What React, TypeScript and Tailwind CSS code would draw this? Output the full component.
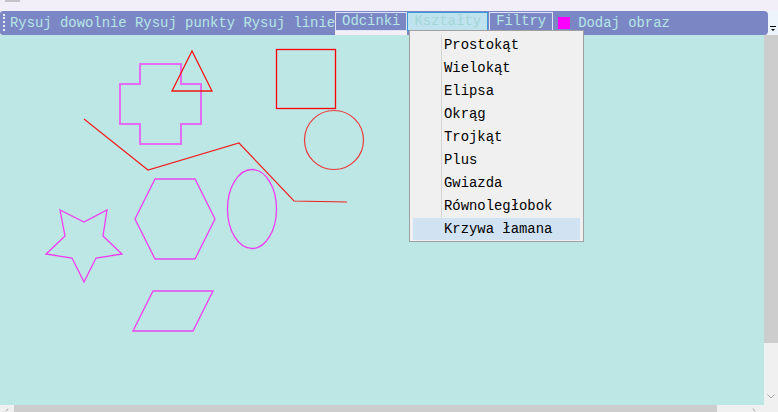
const menuItems = [
  "Prostokąt",
  "Wielokąt",
  "Elipsa",
  "Okrąg",
  "Trojkąt",
  "Plus",
  "Gwiazda",
  "Równoległobok",
  "Krzywa łamana",
];

const mono = { fontFamily: '"Liberation Mono", "Courier New", monospace' };

const Canvas = () => (
  <svg width="764" height="370" viewBox="0 35 764 370" className="block">
    {/* plus */}
    <polygon
      points="140,64 181,64 181,84 201,84 201,124 181,124 181,144 140,144 140,124 120,124 120,84 140,84"
      fill="none"
      stroke="#e46cf2"
      strokeWidth="2"
    />
    {/* triangle */}
    <polygon points="192,51 172,91 212,91" fill="none" stroke="#f01818" strokeWidth="1.3" />
    {/* square */}
    <rect x="276.5" y="49.5" width="59" height="59" fill="none" stroke="#ff0000" strokeWidth="1.3" />
    {/* circle */}
    <circle cx="334" cy="140" r="29.5" fill="none" stroke="#ea3a3a" strokeWidth="1.2" />
    {/* polyline */}
    <polyline
      points="84,119 148,170 239,143 294,201 347,202"
      fill="none"
      stroke="#f02020"
      strokeWidth="1.2"
    />
    {/* hexagon */}
    <polygon
      points="155,179 195,179 215,219 195,259 155,259 135,219"
      fill="none"
      stroke="#ec48f0"
      strokeWidth="1.4"
    />
    {/* ellipse */}
    <ellipse cx="252" cy="209" rx="24.5" ry="39.5" fill="none" stroke="#f03cf0" strokeWidth="1.3" />
    {/* star */}
    <polygon
      points="60,210 84,222 107,210 103,236 122,254 96,258 84,282 72,258 46,254 65,236"
      fill="none"
      stroke="#f03cf0"
      strokeWidth="1.3"
    />
    {/* parallelogram */}
    <polygon
      points="153,291 213,291 193,331 133,331"
      fill="none"
      stroke="#ec48f0"
      strokeWidth="1.4"
    />
  </svg>
);

const App = () => {
  return (
    <div className="relative w-[778px] h-[412px] overflow-hidden bg-[#f3eff8] flex flex-col" style={mono}>
      {/* top strip */}
      <div className="h-[11px] shrink-0 pl-[5px]">
        <div className="w-[15px] h-[2px] bg-[#c4c4c8]" />
      </div>

      {/* toolbar */}
      <div className="flex h-[24px] shrink-0">
        <div className="flex-1 flex items-start bg-[#7b87c5] rounded-l-[3px] rounded-r-[4px] pl-[3px] text-[13.9px] text-[#b6e6e6]">
          <div className="mt-[3px] h-[17px] border-l-2 border-dotted border-[#e8ecf8]" />
          <span className="ml-[5px] mt-[4px] leading-[17px] whitespace-pre">Rysuj dowolnie Rysuj punkty Rysuj linie</span>
          <div className="flex flex-col mt-[1px]">
            <div className="h-[19px] border border-[#dfe3f3] px-[6px] leading-[17px]">Odcinki</div>
            <div className="h-[4px] bg-[#f2eff8]" />
          </div>
          <div className="mt-[1px] h-[19px] border border-[#3a9ad8] bg-[#bfe3ee] px-[6px] leading-[17px] text-[#a4d6d6]">
            Kształty
          </div>
          <div className="mt-[1px] ml-[1px] h-[19px] border border-[#dfe3f3] px-[6px] leading-[17px]">Filtry</div>
          <div className="mt-[6px] ml-[5px] w-[12px] h-[12px] bg-[#ff00ff]" />
          <span className="ml-[8px] mt-[4px] leading-[17px]">Dodaj obraz</span>
        </div>
        <div className="w-[10px] bg-[#eef4fc] flex justify-center pt-[15px]">
          <svg width="6" height="6" viewBox="0 0 6 6">
            <rect x="0" y="0" width="6" height="1" fill="#000" />
            <polygon points="1,3 5,3 3,5" fill="#000" />
          </svg>
        </div>
      </div>

      {/* canvas + vertical scrollbar */}
      <div className="flex flex-1 min-h-0">
        <div className="w-[764px] bg-[#bde7e5]">
          <Canvas />
        </div>
        <div className="flex-1 flex flex-col bg-[#f0f0f0]">
          <div className="h-[308px] bg-[#cdcdcd]" />
          <div className="flex-1 flex items-end justify-center pb-[6px]">
            <svg width="8" height="5" viewBox="0 0 8 5">
              <polyline points="0.5,0.5 4,4 7.5,0.5" fill="none" stroke="#a8a8a8" strokeWidth="1" />
            </svg>
          </div>
        </div>
      </div>

      {/* horizontal scrollbar */}
      <div className="h-[7px] shrink-0 flex bg-[#f0f0f0]">
        <div className="w-[14px] flex items-end justify-center">
          <svg width="4" height="4" viewBox="0 0 4 4">
            <polyline points="3,0.5 1,3.5" fill="none" stroke="#a8a8a8" strokeWidth="1" />
          </svg>
        </div>
        <div className="w-[703px] bg-[#cdcdcd]" />
        <div className="flex-1 flex items-end justify-end pr-[22px]">
          <svg width="4" height="4" viewBox="0 0 4 4">
            <polyline points="1,0.5 3,3.5" fill="none" stroke="#a8a8a8" strokeWidth="1" />
          </svg>
        </div>
      </div>

      {/* dropdown menu */}
      <div className="absolute left-[409px] top-[30px] w-[175px] border border-[#a0a0a0] bg-[#f0f0f0] px-[3px] pt-[3px] text-[13.9px] text-black">
        <div className="absolute left-[31px] top-[4px] bottom-[3px] w-px bg-[#d4d4d4]" />
        {menuItems.map((item, i) => (
          <div
            key={item}
            className={
              i === menuItems.length - 1
                ? "relative h-[22px] mb-px pl-[31px] leading-[22px] bg-[#d1e2f2]"
                : "relative h-[22px] mb-px pl-[31px] leading-[22px]"
            }
          >
            {item}
          </div>
        ))}
      </div>
    </div>
  );
};

export default App;
